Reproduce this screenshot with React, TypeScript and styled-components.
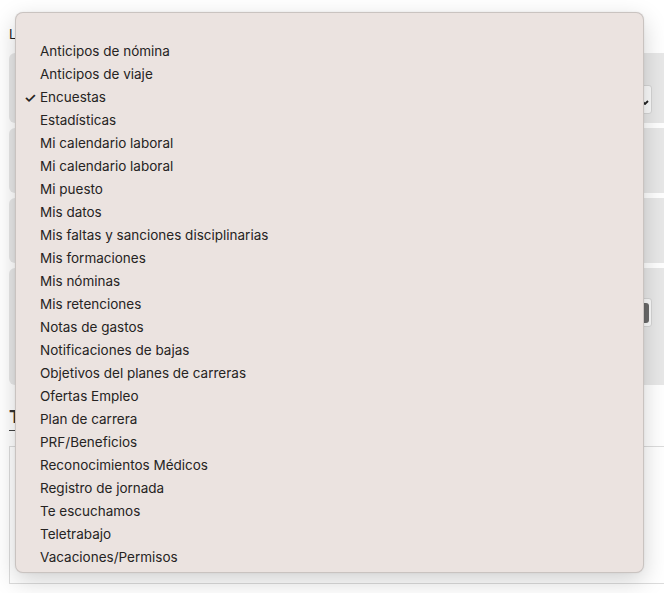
import React from "react";
import styled, { createGlobalStyle } from "styled-components";

const Global = createGlobalStyle`
  html, body { margin: 0; padding: 0; background: #ffffff; overflow: hidden; }
  body { font-family: Inter, "Noto Sans", sans-serif; }
`;

const Page = styled.div`
  position: relative;
  width: 664px;
  height: 593px;
  padding: 24px 0 0 9px;
  box-sizing: border-box;
  overflow: hidden;
`;

const Column = styled.div`
  display: flex;
  flex-direction: column;
`;

const Label = styled.div`
  font-size: 13px;
  color: #222;
  height: 20px;
  line-height: 20px;
  margin-bottom: 9px;
`;

const Cards = styled.div`
  display: flex;
  flex-direction: column;
  gap: 5px;
  margin-right: -12px;
`;

const Card = styled.div<{ $h: number; $pt?: number }>`
  height: ${(p) => p.$h}px;
  background: #e8e8e8;
  border-radius: 6px;
  display: flex;
  align-items: flex-start;
  justify-content: flex-end;
  padding: ${(p) => p.$pt ?? 0}px 24px 0 0;
  box-sizing: border-box;
`;

const Control = styled.div`
  width: 22px;
  height: 29px;
  background: #fbfbfb;
  border: 1px solid #d6d6d6;
  border-radius: 3px;
  display: flex;
  align-items: center;
  justify-content: flex-end;
  padding-right: 2px;
  box-sizing: border-box;
`;

const Knob = styled.div`
  width: 8px;
  height: 20px;
  border-radius: 3px;
  background: #6b6b6b;
`;

const Heading = styled.div`
  margin-top: 21px;
  font-size: 18px;
  font-weight: 700;
  color: #333;
  align-self: flex-start;
  border-bottom: 1px solid #444;
  padding-bottom: 2px;
  line-height: 22px;
`;

const Panel = styled.div`
  margin-top: 15px;
  height: 138px;
  border: 1px solid #dcdcdc;
  border-right: none;
  background: #fff;
  box-sizing: border-box;
`;

const Menu = styled.div`
  position: absolute;
  left: 15px;
  top: 12px;
  width: 629px;
  height: 561px;
  box-sizing: border-box;
  padding: 27px 0 4px 0;
  background: #ebe3e0;
  border: 1px solid rgba(0, 0, 0, 0.14);
  border-radius: 8px;
  box-shadow: 0 8px 24px rgba(0, 0, 0, 0.18), 0 0 2px rgba(0, 0, 0, 0.08);
  display: flex;
  flex-direction: column;
`;

const Item = styled.div`
  position: relative;
  height: 23px;
  line-height: 23px;
  padding-left: 24px;
  font-family: Inter, "Noto Sans", sans-serif;
  font-size: 13.5px;
  color: #262323;
  white-space: nowrap;
`;

const Check = styled.span`
  position: absolute;
  left: 8px;
  top: 0;
  font-size: 14px;
  font-weight: 600;
  color: #262323;
`;

const items = [
  "Anticipos de nómina",
  "Anticipos de viaje",
  "Encuestas",
  "Estadísticas",
  "Mi calendario laboral",
  "Mi calendario laboral",
  "Mi puesto",
  "Mis datos",
  "Mis faltas y sanciones disciplinarias",
  "Mis formaciones",
  "Mis nóminas",
  "Mis retenciones",
  "Notas de gastos",
  "Notificaciones de bajas",
  "Objetivos del planes de carreras",
  "Ofertas Empleo",
  "Plan de carrera",
  "PRF/Beneficios",
  "Reconocimientos Médicos",
  "Registro de jornada",
  "Te escuchamos",
  "Teletrabajo",
  "Vacaciones/Permisos",
];

export default function App() {
  return (
    <>
      <Global />
      <Page>
        <Column>
          <Label>Listado de módulos</Label>
          <Cards>
            <Card $h={70} $pt={32}>
              <Control>
                <svg width="8" height="10" viewBox="0 0 8 10">
                  <path d="M1 6l3 3 3-3" stroke="#222" strokeWidth="1.8" fill="none" />
                </svg>
              </Control>
            </Card>
            <Card $h={65} />
            <Card $h={65} />
            <Card $h={117} $pt={30}>
              <Control>
                <Knob />
              </Control>
            </Card>
          </Cards>
          <Heading>Tipos</Heading>
          <Panel />
        </Column>
        <Menu>
          {items.map((t, i) => (
            <Item key={i}>
              {t === "Encuestas" && <Check>✓</Check>}
              {t}
            </Item>
          ))}
        </Menu>
      </Page>
    </>
  );
}
